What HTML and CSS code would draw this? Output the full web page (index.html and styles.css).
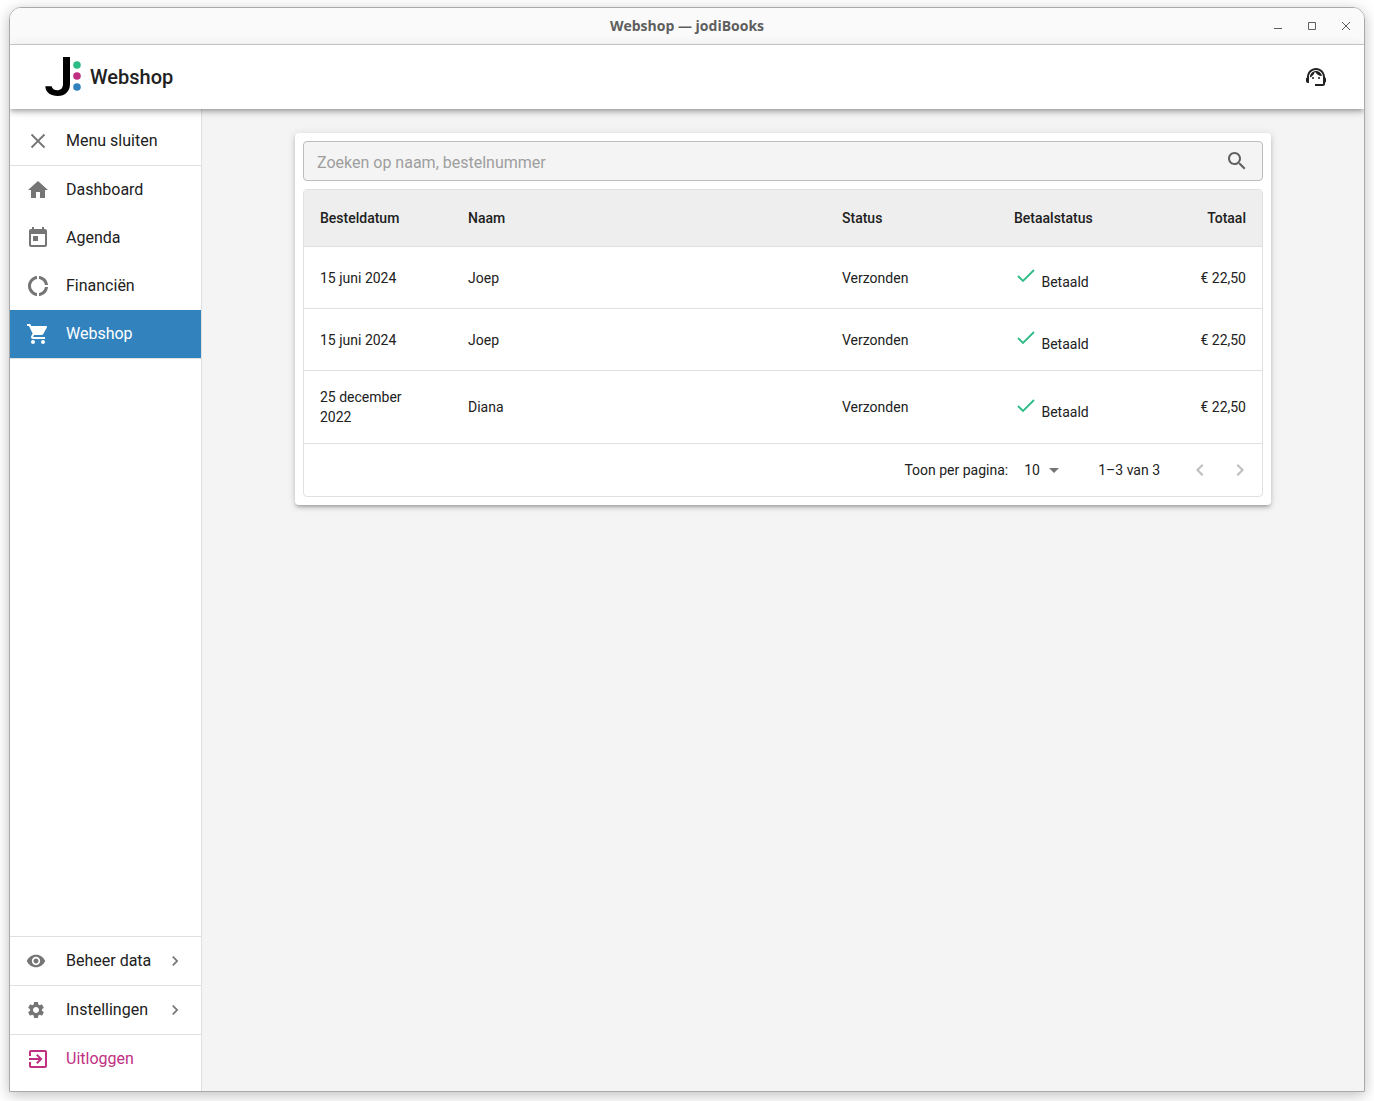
FILE: index.html
```html
<!DOCTYPE html>
<html lang="nl">
<head>
<meta charset="utf-8">
<meta name="viewport" content="width=device-width, initial-scale=1">
<title>Webshop — jodiBooks</title>
<link rel="stylesheet" href="styles.css">
</head>
<body>
<div class="window">
  <div class="titlebar">
    <span class="titlebar-text">Webshop — jodiBooks</span>
    <div class="window-controls">
      <button type="button" aria-label="Minimaliseren"><svg viewBox="0 0 10 10"><path d="M1 7.5h8"/></svg></button>
      <button type="button" aria-label="Maximaliseren"><svg viewBox="0 0 10 10"><path d="M1.5 1.5h7v7h-7z"/></svg></button>
      <button type="button" aria-label="Sluiten"><svg viewBox="0 0 10 10"><path d="M1 1l8 8M9 1l-8 8"/></svg></button>
    </div>
  </div>

  <header class="appbar">
    <svg class="logo" viewBox="0 0 36 40" aria-hidden="true">
      <path d="M18 0h7v27c0 7.5-5 12-12.2 12S.6 35.5.3 29.3h6.4c.4 2.7 2.7 3.9 5.6 3.9 3.6 0 5.700-2.1 5.7-6.5z"/>
      <circle cx="32" cy="8" r="3.8" fill="#2dbd84"/>
      <circle cx="32" cy="19" r="3.8" fill="#bf3083"/>
      <circle cx="32" cy="30" r="3.8" fill="#3182bd"/>
    </svg>
    <h1>Webshop</h1>
    <button class="support" type="button" aria-label="Hulp">
      <svg class="icon" viewBox="0 0 24 24"><path d="M21 12.22C21 6.73 16.74 3 12 3c-4.69 0-9 3.65-9 9.28-.6.34-1 .98-1 1.72v2c0 1.1.9 2 2 2h1v-6.1c0-3.87 3.13-7 7-7s7 3.13 7 7V19h-8v2h8c1.1 0 2-.9 2-2v-1.22c.59-.31 1-.92 1-1.64v-2.3c0-.7-.41-1.31-1-1.62z"/><circle cx="9" cy="13" r="1"/><circle cx="15" cy="13" r="1"/><path d="M18 11.03C17.52 8.18 15.04 6 12.05 6c-3.03 0-6.29 2.51-6.03 6.45 2.47-1.01 4.33-3.21 4.86-5.89 1.31 2.63 4 4.44 7.12 4.47z"/></svg>
    </button>
  </header>

  <div class="body">
    <nav class="sidebar" aria-label="Hoofdmenu">
      <button class="item" type="button"><svg class="icon thin" viewBox="0 0 24 24"><path d="M5.5 5.5l13 13M18.5 5.5l-13 13"/></svg>Menu sluiten</button>
      <div class="group">
        <a class="item" href="#"><svg class="icon" viewBox="0 0 24 24"><path d="M10 20v-6h4v6h5v-8h3L12 3 2 12h3v8z"/></svg>Dashboard</a>
        <a class="item" href="#"><svg class="icon" viewBox="0 0 24 24"><path d="M19 3h-1V1h-2v2H8V1H6v2H5c-1.11 0-1.99.9-1.99 2L3 19c0 1.1.89 2 2 2h14c1.1 0 2-.9 2-2V5c0-1.1-.9-2-2-2zm0 16H5V8h14v11zM7 10h5v5H7z"/></svg>Agenda</a>
        <a class="item" href="#"><svg class="icon" viewBox="0 0 24 24"><path d="M11 5.08V2c-5 .5-9 4.81-9 10s4 9.5 9 10v-3.08c-3-.48-6-3.4-6-6.92s3-6.44 6-6.92zM18.97 11H22c-.47-5-4-8.53-9-9v3.08C16 5.51 18.54 8 18.97 11zM13 18.92V22c5-.47 8.53-4 9-9h-3.03c-.43 3-2.97 5.49-5.97 5.92z"/></svg>Financiën</a>
        <a class="item active" href="#" aria-current="page"><svg class="icon" viewBox="0 0 24 24"><path d="M7 18c-1.1 0-1.99.9-1.99 2S5.9 22 7 22s2-.9 2-2-.9-2-2-2zM1 2v2h2l3.6 7.59-1.35 2.45c-.16.28-.25.61-.25.96 0 1.1.9 2 2 2h12v-2H7.42c-.14 0-.25-.11-.25-.25l.03-.12.9-1.63h7.45c.75 0 1.41-.41 1.75-1.03l3.58-6.49c.08-.14.12-.31.12-.48 0-.55-.45-1-1-1H5.21l-.94-2H1zm16 16c-1.1 0-1.99.9-1.99 2s.89 2 1.99 2 2-.9 2-2-.9-2-2-2z"/></svg>Webshop</a>
      </div>
      <div class="group bottom">
        <a class="item" href="#"><svg class="icon small" viewBox="0 0 24 24"><path d="M12 4.5C7 4.5 2.73 7.61 1 12c1.73 4.39 6 7.5 11 7.5s9.27-3.11 11-7.5c-1.73-4.39-6-7.5-11-7.5zM12 17c-2.76 0-5-2.24-5-5s2.24-5 5-5 5 2.24 5 5-2.24 5-5 5zm0-8c-1.66 0-3 1.34-3 3s1.34 3 3 3 3-1.34 3-3-1.34-3-3-3z"/></svg>Beheer data<svg class="icon chevron" viewBox="0 0 24 24"><path d="M10 6L8.59 7.41 13.17 12l-4.58 4.59L10 18l6-6z"/></svg></a>
      </div>
      <div class="group">
        <a class="item" href="#"><svg class="icon small" viewBox="0 0 24 24"><path d="M19.14 12.94c.04-.3.06-.61.06-.94 0-.32-.02-.64-.07-.94l2.03-1.58c.18-.14.23-.41.12-.61l-1.92-3.32c-.12-.22-.37-.29-.59-.22l-2.39.96c-.5-.38-1.03-.7-1.62-.94l-.36-2.54c-.04-.24-.24-.41-.48-.41h-3.84c-.24 0-.43.17-.47.41l-.36 2.54c-.59.24-1.13.57-1.62.94l-2.39-.96c-.22-.08-.47 0-.59.22L2.74 8.87c-.12.21-.08.47.12.61l2.03 1.58c-.05.3-.09.63-.09.94s.02.64.07.94l-2.03 1.58c-.18.14-.23.41-.12.61l1.92 3.32c.12.22.37.29.59.22l2.39-.96c.5.38 1.03.7 1.62.94l.36 2.54c.05.24.24.41.48.41h3.84c.24 0 .44-.17.47-.41l.36-2.54c.59-.24 1.13-.56 1.62-.94l2.39.96c.22.08.47 0 .59-.22l1.92-3.32c.12-.22.07-.47-.12-.61l-2.01-1.58zM12 15.6c-1.98 0-3.6-1.62-3.6-3.6s1.62-3.6 3.6-3.6 3.6 1.62 3.6 3.6-1.62 3.6-3.6 3.6z"/></svg>Instellingen<svg class="icon chevron" viewBox="0 0 24 24"><path d="M10 6L8.59 7.41 13.17 12l-4.58 4.59L10 18l6-6z"/></svg></a>
      </div>
      <button class="item logout" type="button"><svg class="icon" viewBox="0 0 24 24"><path d="M10.09 15.59L11.5 17l5-5-5-5-1.41 1.41L12.67 11H3v2h9.67l-2.58 2.59zM19 3H5c-1.11 0-2 .9-2 2v4h2V5h14v14H5v-4H3v4c0 1.1.89 2 2 2h14c1.1 0 2-.9 2-2V5c0-1.1-.9-2-2-2z"/></svg>Uitloggen</button>
    </nav>

    <main class="main">
      <section class="card">
        <form class="search" role="search">
          <input type="search" aria-label="Zoeken" placeholder="Zoeken op naam, bestelnummer">
          <button type="submit" aria-label="Zoek"><svg class="icon" viewBox="0 0 24 24"><path d="M15.5 14h-.79l-.28-.27C15.41 12.59 16 11.11 16 9.5 16 5.91 13.09 3 9.5 3S3 5.91 3 9.5 5.91 16 9.5 16c1.61 0 3.09-.59 4.23-1.57l.27.28v.79l5 4.99L20.49 19l-4.99-5zm-6 0C7.01 14 5 11.99 5 9.5S7.01 5 9.5 5 14 7.01 14 9.5 11.99 14 9.5 14z"/></svg></button>
        </form>
        <div class="orders">
          <table>
            <colgroup><col class="col-date"><col><col class="col-state"><col class="col-state"><col class="col-total"></colgroup>
            <thead>
              <tr><th scope="col">Besteldatum</th><th scope="col">Naam</th><th scope="col">Status</th><th scope="col">Betaalstatus</th><th scope="col" class="amount">Totaal</th></tr>
            </thead>
            <tbody>
              <tr><td>15 juni 2024</td><td>Joep</td><td>Verzonden</td><td><svg class="check" viewBox="0 0 24 24"><path d="M4 13l5 5L20 7"/></svg> Betaald</td><td class="amount">€ 22,50</td></tr>
              <tr><td>15 juni 2024</td><td>Joep</td><td>Verzonden</td><td><svg class="check" viewBox="0 0 24 24"><path d="M4 13l5 5L20 7"/></svg> Betaald</td><td class="amount">€ 22,50</td></tr>
              <tr><td>25 december 2022</td><td>Diana</td><td>Verzonden</td><td><svg class="check" viewBox="0 0 24 24"><path d="M4 13l5 5L20 7"/></svg> Betaald</td><td class="amount">€ 22,50</td></tr>
            </tbody>
          </table>
          <div class="pagination">
            <label for="per-page">Toon per pagina:</label>
            <div class="select">
              <select id="per-page"><option>10</option><option>25</option><option>50</option></select>
              <svg class="icon" viewBox="0 0 24 24"><path d="M7 10l5 5 5-5z"/></svg>
            </div>
            <span class="range">1–3 van 3</span>
            <button type="button" disabled aria-label="Vorige pagina"><svg class="icon" viewBox="0 0 24 24"><path d="M15.41 7.41L14 6l-6 6 6 6 1.41-1.41L10.83 12z"/></svg></button>
            <button type="button" disabled aria-label="Volgende pagina"><svg class="icon" viewBox="0 0 24 24"><path d="M10 6L8.59 7.41 13.17 12l-4.58 4.59L10 18l6-6z"/></svg></button>
          </div>
        </div>
      </section>
    </main>
  </div>
</div>
</body>
</html>
```

FILE: styles.css
```css
* {
  box-sizing: border-box;
}

body {
  margin: 0;
  min-height: 100vh;
  padding: 7px 9px 9px;
  display: flex;
  background: #fff;
  color: #212121;
  font: 16px/24px Roboto, "Liberation Sans", sans-serif;
}

button,
input,
select {
  margin: 0;
  padding: 0;
  border: 0;
  background: none;
  color: inherit;
  font: inherit;
}

a {
  color: inherit;
  text-decoration: none;
}

svg {
  flex: none;
}

.icon {
  display: block;
  width: 24px;
  height: 24px;
  fill: currentColor;
}

/* Window frame */
.window {
  flex: 1;
  min-width: 0;
  display: flex;
  flex-direction: column;
  overflow: hidden;
  border: 1px solid #a9a9a9;
  border-radius: 12px 12px 0 0;
  box-shadow: 0 3px 14px rgba(0, 0, 0, 0.26);
}

.titlebar {
  height: 37px;
  padding: 0 13px;
  display: grid;
  grid-template-columns: 1fr auto 1fr;
  align-items: center;
  background: #fafafa;
  border-bottom: 1px solid #cfcfcf;
  color: #5e5e5e;
}

.titlebar-text {
  grid-column: 2;
  font: bold 14px/20px "Open Sans", "Noto Sans", sans-serif;
}

.window-controls {
  display: flex;
  justify-content: flex-end;
  gap: 24px;
}

.window-controls button {
  width: 10px;
  height: 10px;
}

.window-controls svg {
  display: block;
  width: 10px;
  height: 10px;
  fill: none;
  stroke: currentColor;
}

.appbar {
  position: relative;
  z-index: 1;
  height: 64px;
  padding: 0 36px 0 35px;
  display: flex;
  align-items: center;
  background: #fff;
  box-shadow: 0 2px 4px -1px rgba(0, 0, 0, 0.2), 0 4px 5px rgba(0, 0, 0, 0.14), 0 1px 10px rgba(0, 0, 0, 0.12);
}

.logo {
  width: 36px;
  height: 40px;
}

.appbar h1 {
  margin: 0 auto 0 9px;
  font-size: 20px;
  font-weight: 500;
  line-height: 32px;
}

.body {
  flex: 1;
  display: flex;
}

/* Sidebar */
.sidebar {
  flex: none;
  width: 192px;
  padding: 8px 0;
  display: flex;
  flex-direction: column;
  background: #fff;
  border-right: 1px solid #e0e0e0;
}

.group {
  border-top: 1px solid #e0e0e0;
}

.group:first-of-type,
.group:last-of-type {
  border-bottom: 1px solid #e0e0e0;
}

.bottom {
  margin-top: auto;
}

.item {
  width: 100%;
  height: 48px;
  padding: 0 16px;
  display: flex;
  align-items: center;
  text-align: left;
  white-space: nowrap;
}

.item .icon {
  margin-right: 16px;
  color: #757575;
}

.item .small {
  width: 20px;
  height: 20px;
  margin-right: 20px;
}

.item .chevron {
  width: 20px;
  height: 20px;
  margin: 0 0 0 auto;
}

.thin {
  fill: none;
  stroke: currentColor;
  stroke-width: 1.8;
}

.item.active {
  background: #3182bd;
  color: #fff;
}

.item.active .icon,
.item.logout .icon {
  color: inherit;
}

.item.logout {
  color: #bf3083;
}

/* Order list */
.main {
  flex: 1;
  min-width: 0;
  padding: 24px;
  background: #f4f4f4;
}

.card {
  max-width: 976px;
  margin: 0 auto;
  padding: 8px;
  display: grid;
  gap: 8px;
  background: #fff;
  border-radius: 4px;
  box-shadow: 0 3px 3px -2px rgba(0, 0, 0, 0.2), 0 3px 4px rgba(0, 0, 0, 0.14), 0 1px 8px rgba(0, 0, 0, 0.12);
}

.search {
  height: 40px;
  padding: 0 13px;
  display: flex;
  align-items: center;
  background: #f4f4f4;
  border: 1px solid #bdbdbd;
  border-radius: 4px;
}

.search input {
  flex: 1;
  min-width: 0;
  height: 26px;
  padding-top: 2px;
  outline: none;
  appearance: none;
}

.search input::placeholder {
  color: #9e9e9e;
}

.search button {
  color: #616161;
}

.orders {
  border: 1px solid #e0e0e0;
  border-radius: 4px;
  overflow: hidden;
  font-size: 14px;
  line-height: 20px;
}

table {
  width: 100%;
  border-collapse: separate;
  border-spacing: 0;
  table-layout: fixed;
}

.col-date {
  width: 148px;
}

.col-state {
  width: 172px;
}

.col-total {
  width: 92px;
}

th,
td {
  padding: 16px;
  border-bottom: 1px solid #e0e0e0;
  text-align: left;
}

th {
  background: #eee;
  font-weight: 500;
  line-height: 24px;
}

.amount {
  padding-left: 0;
  text-align: right;
}

.check {
  width: 24px;
  height: 24px;
  vertical-align: baseline;
  fill: none;
  stroke: #2dbd84;
  stroke-width: 1.8;
}

.pagination {
  min-height: 52px;
  padding-right: 2px;
  display: flex;
  align-items: center;
  justify-content: flex-end;
}

.select {
  display: grid;
  width: 50px;
  margin: 0 32px 0 8px;
}

.select > * {
  grid-area: 1 / 1;
}

.select select {
  padding-left: 8px;
  height: 24px;
  appearance: none;
}

.select .icon {
  justify-self: end;
  color: #757575;
  pointer-events: none;
}

.range {
  margin-right: 20px;
}

.pagination button {
  padding: 8px;
  color: #bdbdbd;
}
```
